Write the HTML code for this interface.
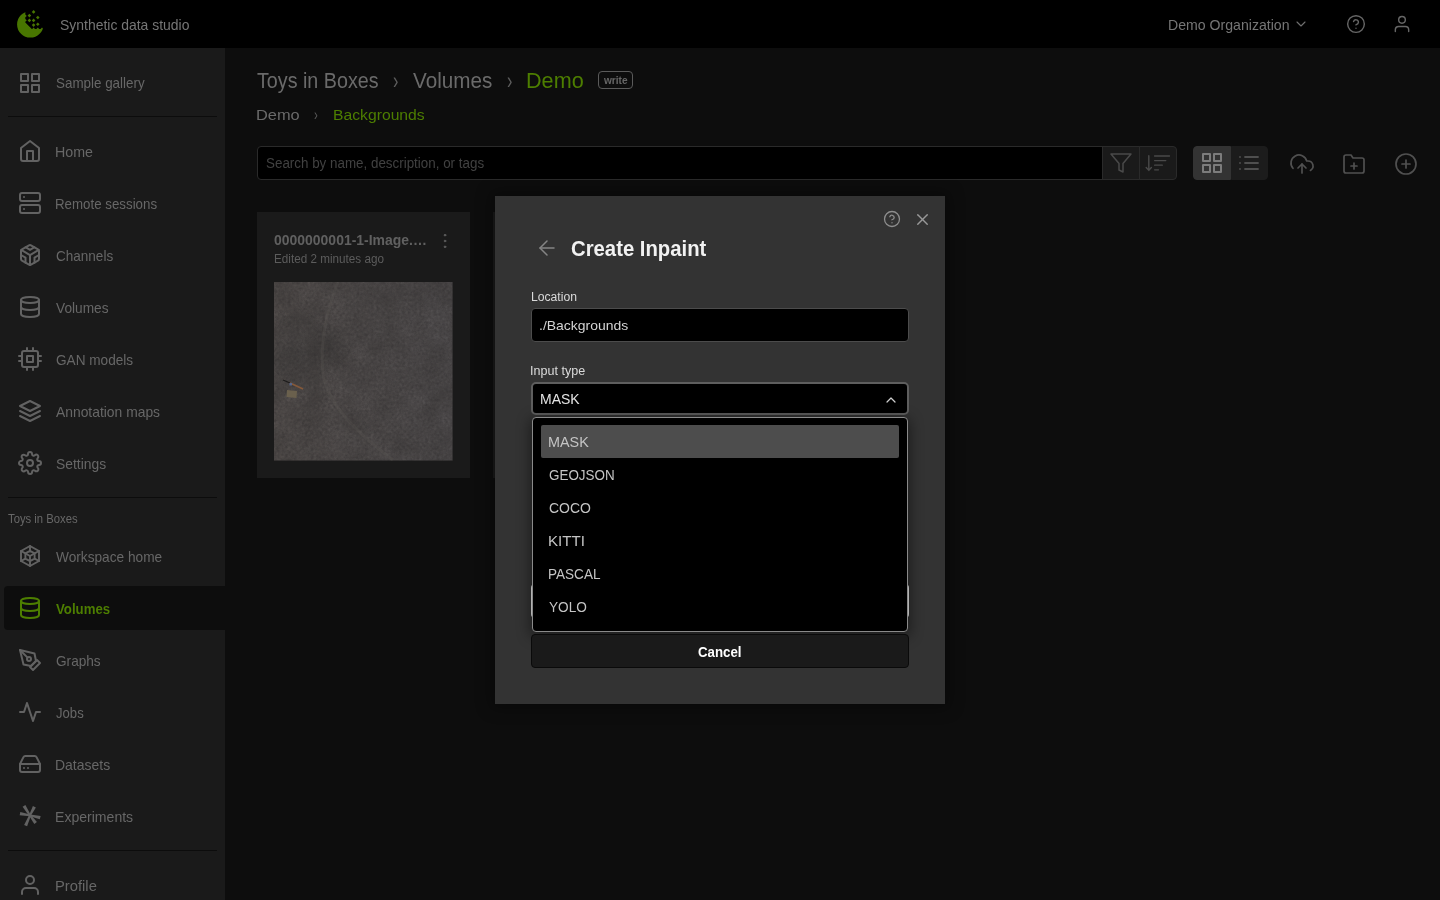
<!DOCTYPE html>
<html lang="en"><head><meta charset="utf-8"><title>Synthetic data studio</title>
<style>
*{box-sizing:border-box;margin:0;padding:0}
html,body{width:1440px;height:900px;overflow:hidden;background:#0d0d0d;font-family:"Liberation Sans",sans-serif}
body{position:relative}
.a{position:absolute}
.t{position:absolute;white-space:nowrap;line-height:1;transform-origin:0 0;display:block}
svg.i{position:absolute;fill:none;stroke:#626262;stroke-width:2;stroke-linecap:round;stroke-linejoin:round;overflow:visible}
#hdr{left:0;top:0;width:1440px;height:48px;background:#000}
#side{left:0;top:48px;width:225px;height:852px;background:#1a1a1a}
.hr{position:absolute;left:8px;width:209px;height:1px;background:#0c0c0c}
#act{left:4px;top:586px;width:221px;height:44px;background:#0d0d0d;border-radius:4px 0 0 4px}
#search{left:257px;top:146px;width:846px;height:34px;background:#000;border:1px solid #2a2a2a;border-radius:4px 0 0 4px}
.tb{position:absolute;top:146px;height:34px;background:#1a1a1a;border:1px solid #2a2a2a}
.card{position:absolute;top:212px;height:266px;background:#1a1a1a}
#badge{left:598px;top:71px;width:35px;height:18px;border:1px solid #5a5a5a;border-radius:4px}
#modal{left:495px;top:196px;width:450px;height:508px;background:#333;box-shadow:0 0 14px 4px rgba(0,0,0,.35)}
.inp{position:absolute;left:531px;width:378px;background:#000;border-radius:4px}
#pop{left:532px;top:417px;width:376px;height:215px;background:#000;border:1px solid #8a8a8a;border-radius:4px;box-shadow:0 3px 14px 2px rgba(0,0,0,.45)}
#sel{left:541px;top:425px;width:358px;height:33px;background:#4d4d4d;border-radius:2px}

</style></head>
<body>
<div class="a" id="hdr"></div>
<div class="a" id="side"></div>
<div class="hr" style="top:116px"></div>
<div class="hr" style="top:497px"></div>
<div class="hr" style="top:850px"></div>
<div class="a" id="act"></div>

<!-- logo -->
<svg class="a" style="left:0;top:0" width="60" height="48" viewBox="0 0 60 48">
  <defs><clipPath id="lc"><circle cx="30.3" cy="24.4" r="13.2"/></clipPath></defs>
  <g fill="#487600">
    <polygon clip-path="url(#lc)" points="0,0 26.2,0 25.3,13 25.3,14.5 26.8,15.9 25.3,17.3 25.3,18.9 26.8,20.3 25.3,21.7 25.3,22.4 31.8,29 32.2,29 33.6,27.6 35,29 36.4,29 37.8,27.6 39.2,29 40.6,29 42,27.6 43.4,29 60,29 60,48 0,48"/>
    <g id="dm">
      <polygon points="33.6,10.1 35.4,11.9 33.6,13.7 31.8,11.9"/>
      <polygon points="29.4,13.8 31.2,15.6 29.4,17.4 27.6,15.6"/>
      <polygon points="37.8,15.7 39.6,17.5 37.8,19.3 36,17.5"/>
      <polygon points="29.4,18.6 31.2,20.4 29.4,22.2 27.6,20.4"/>
      <polygon points="33.6,18.6 35.4,20.4 33.6,22.2 31.8,20.4"/>
      <polygon points="33.6,23.3 35.4,25.1 33.6,26.9 31.8,25.1"/>
      <polygon points="37.8,22.5 39.6,24.3 37.8,26.1 36,24.3"/>
    </g>
  </g>
</svg>

<!-- header right icons -->
<svg class="i" style="left:1293px;top:15.5px;stroke:#707070;stroke-width:1.6" width="16" height="16" viewBox="0 0 24 24"><polyline points="6 9 12 15 18 9"/></svg>
<svg class="i" style="left:1346px;top:14px;stroke:#666;stroke-width:1.7" width="20" height="20" viewBox="0 0 24 24"><circle cx="12" cy="12" r="10"/><path d="M9.09 9a3 3 0 0 1 5.83 1c0 2-3 3-3 3"/><line x1="12" y1="17" x2="12.01" y2="17"/></svg>
<svg class="i" style="left:1392px;top:14px;stroke:#666;stroke-width:1.7" width="20" height="20" viewBox="0 0 24 24"><path d="M20 21v-2a4 4 0 0 0-4-4H8a4 4 0 0 0-4 4v2"/><circle cx="12" cy="7" r="4"/></svg>

<!-- sidebar icons -->
<svg class="i" style="left:18px;top:71px" width="24" height="24" viewBox="0 0 24 24"><rect x="3" y="3" width="7" height="7"/><rect x="14" y="3" width="7" height="7"/><rect x="14" y="14" width="7" height="7"/><rect x="3" y="14" width="7" height="7"/></svg>
<svg class="i" style="left:18px;top:139px" width="24" height="24" viewBox="0 0 24 24"><path d="M3 9l9-7 9 7v11a2 2 0 0 1-2 2H5a2 2 0 0 1-2-2z"/><polyline points="9 22 9 12 15 12 15 22"/></svg>
<svg class="i" style="left:18px;top:191px" width="24" height="24" viewBox="0 0 24 24"><rect x="2" y="2" width="20" height="8" rx="2" ry="2"/><rect x="2" y="14" width="20" height="8" rx="2" ry="2"/><line x1="6" y1="6" x2="6.01" y2="6"/><line x1="6" y1="18" x2="6.01" y2="18"/></svg>
<svg class="i" style="left:18px;top:243px" width="24" height="24" viewBox="0 0 24 24"><path d="M21 16V8a2 2 0 0 0-1-1.73l-7-4a2 2 0 0 0-2 0l-7 4A2 2 0 0 0 3 8v8a2 2 0 0 0 1 1.73l7 4a2 2 0 0 0 2 0l7-4A2 2 0 0 0 21 16z"/><polyline points="7.5 4.21 12 6.81 16.5 4.21"/><polyline points="7.5 19.79 7.5 14.6 3 12"/><polyline points="21 12 16.5 14.6 16.5 19.79"/><polyline points="3.27 6.96 12 12.01 20.73 6.96"/><line x1="12" y1="22.08" x2="12" y2="12"/></svg>
<svg class="i" style="left:18px;top:295px" width="24" height="24" viewBox="0 0 24 24"><ellipse cx="12" cy="5" rx="9" ry="3"/><path d="M21 12c0 1.66-4 3-9 3s-9-1.34-9-3"/><path d="M3 5v14c0 1.66 4 3 9 3s9-1.34 9-3V5"/></svg>
<svg class="i" style="left:18px;top:347px" width="24" height="24" viewBox="0 0 24 24"><rect x="4" y="4" width="16" height="16" rx="2" ry="2"/><rect x="9" y="9" width="6" height="6"/><line x1="9" y1="1" x2="9" y2="4"/><line x1="15" y1="1" x2="15" y2="4"/><line x1="9" y1="20" x2="9" y2="23"/><line x1="15" y1="20" x2="15" y2="23"/><line x1="20" y1="9" x2="23" y2="9"/><line x1="20" y1="14" x2="23" y2="14"/><line x1="1" y1="9" x2="4" y2="9"/><line x1="1" y1="14" x2="4" y2="14"/></svg>
<svg class="i" style="left:18px;top:399px" width="24" height="24" viewBox="0 0 24 24"><polygon points="12 2 2 7 12 12 22 7 12 2"/><polyline points="2 17 12 22 22 17"/><polyline points="2 12 12 17 22 12"/></svg>
<svg class="i" style="left:18px;top:451px" width="24" height="24" viewBox="0 0 24 24"><circle cx="12" cy="12" r="3"/><path d="M19.4 15a1.65 1.65 0 0 0 .33 1.82l.06.06a2 2 0 0 1 0 2.83 2 2 0 0 1-2.83 0l-.06-.06a1.65 1.65 0 0 0-1.82-.33 1.65 1.65 0 0 0-1 1.51V21a2 2 0 0 1-2 2 2 2 0 0 1-2-2v-.09A1.65 1.65 0 0 0 9 19.4a1.65 1.65 0 0 0-1.82.33l-.06.06a2 2 0 0 1-2.83 0 2 2 0 0 1 0-2.83l.06-.06a1.65 1.65 0 0 0 .33-1.82 1.65 1.65 0 0 0-1.51-1H3a2 2 0 0 1-2-2 2 2 0 0 1 2-2h.09A1.65 1.65 0 0 0 4.6 9a1.65 1.65 0 0 0-.33-1.82l-.06-.06a2 2 0 0 1 0-2.83 2 2 0 0 1 2.83 0l.06.06a1.65 1.65 0 0 0 1.82.33H9a1.65 1.65 0 0 0 1-1.51V3a2 2 0 0 1 2-2 2 2 0 0 1 2 2v.09a1.65 1.65 0 0 0 1 1.51 1.65 1.65 0 0 0 1.82-.33l.06-.06a2 2 0 0 1 2.83 0 2 2 0 0 1 0 2.83l-.06.06a1.65 1.65 0 0 0-.33 1.82V9a1.65 1.65 0 0 0 1.51 1H21a2 2 0 0 1 2 2 2 2 0 0 1-2 2h-.09a1.65 1.65 0 0 0-1.51 1z"/></svg>
<!-- workspace home: nested hexagons -->
<svg class="i" style="left:18px;top:544px;stroke-width:1.9" width="24" height="24" viewBox="0 0 24 24"><polygon points="12 2 21 7 21 17 12 22 3 17 3 7"/><polygon points="12 6.800 16.600 9.400 16.600 14.600 12 17.200 7.400 14.600 7.400 9.400"/><path d="M12 2V6.800M21 7l-4.400 2.400M21 17l-4.400-2.400M12 22V17.200M3 17l4.400-2.400M3 7l4.400 2.400M12 12l-4.600-2.600M12 12l4.600-2.600M12 12v5.200"/></svg>
<svg class="i" style="left:18px;top:596px;stroke:#4d7e00" width="24" height="24" viewBox="0 0 24 24"><ellipse cx="12" cy="5" rx="9" ry="3"/><path d="M21 12c0 1.66-4 3-9 3s-9-1.34-9-3"/><path d="M3 5v14c0 1.66 4 3 9 3s9-1.34 9-3V5"/></svg>
<svg class="i" style="left:18px;top:648px" width="24" height="24" viewBox="0 0 24 24"><path d="M12 19l7-7 3 3-7 7-3-3z"/><path d="M18 13l-1.500-7.500L2 2l3.500 14.500L13 18l5-5z"/><path d="M2 2l7.586 7.586"/><circle cx="11" cy="11" r="2"/></svg>
<svg class="i" style="left:18px;top:700px" width="24" height="24" viewBox="0 0 24 24"><polyline points="22 12 18 12 15 21 9 3 6 12 2 12"/></svg>
<svg class="i" style="left:18px;top:752px" width="24" height="24" viewBox="0 0 24 24"><line x1="22" y1="12" x2="2" y2="12"/><path d="M5.45 5.11L2 12v6a2 2 0 0 0 2 2h16a2 2 0 0 0 2-2v-6l-3.450-6.890A2 2 0 0 0 16.760 4H7.240a2 2 0 0 0-1.790 1.110z"/><line x1="6" y1="16" x2="6.010" y2="16"/><line x1="10" y1="16" x2="10.010" y2="16"/></svg>
<!-- experiments: tapered asterisk -->
<svg class="a" style="left:18px;top:803px" width="24" height="24" viewBox="18 803 24 24"><g fill="#626262"><polygon points="30.8,814.9 25.4,805.0 22.6,806.8 29.2,815.9"/><polygon points="30.8,815.8 35.9,807.6 32.9,806.0 29.2,815.0"/><polygon points="30.2,814.5 20.3,812.1 19.7,815.3 29.8,816.3"/><polygon points="29.8,816.3 39.8,819.3 40.6,816.1 30.2,814.5"/><polygon points="29.1,815.0 24.1,825.1 27.1,826.3 30.9,815.8"/><polygon points="29.2,816.0 34.3,824.0 36.9,822.0 30.8,814.8"/><circle cx="30" cy="815.400" r="1.500"/></g></svg>
<svg class="i" style="left:18px;top:873px" width="24" height="24" viewBox="0 0 24 24"><path d="M20 21v-2a4 4 0 0 0-4-4H8a4 4 0 0 0-4 4v2"/><circle cx="12" cy="7" r="4"/></svg>

<!-- breadcrumbs -->
<div class="a" id="badge"></div>

<!-- toolbar -->
<div class="a" id="search"></div>
<div class="tb" style="left:1102px;width:38px"></div>
<div class="tb" style="left:1139px;width:38px;border-radius:0 4px 4px 0"></div>
<div class="tb" style="left:1193px;width:38px;background:#333;border-color:#333;border-radius:4px 0 0 4px"></div>
<div class="tb" style="left:1231px;width:37px;background:#1c1c1c;border-color:#1c1c1c;border-radius:0 4px 4px 0"></div>
<svg class="i" style="left:1109px;top:151px;stroke:#4a4a4a;stroke-width:1.5" width="24" height="24" viewBox="0 0 24 24"><polygon points="22 3 2 3 10 12.460 10 19 14 21 14 12.460 22 3"/></svg>
<svg class="i" style="left:1140px;top:146px;stroke:#4a4a4a;stroke-width:1.4" width="36" height="34" viewBox="1140 146 36 34"><path d="M1148.800 155.800V170.300M1146.200 167.500l2.600 2.900 2.600-2.900"/><path d="M1154.600 156H1169.500M1154.600 160.600H1165.800M1154.600 165.200H1162.300M1154.600 169.800H1158.500" stroke-width="1.3"/></svg>
<svg class="i" style="left:1200px;top:151px;stroke:#7c7c7c" width="24" height="24" viewBox="0 0 24 24"><rect x="3" y="3" width="7" height="7"/><rect x="14" y="3" width="7" height="7"/><rect x="14" y="14" width="7" height="7"/><rect x="3" y="14" width="7" height="7"/></svg>
<svg class="i" style="left:1237px;top:151px;stroke:#4f4f4f;stroke-width:1.8" width="24" height="24" viewBox="0 0 24 24"><line x1="8" y1="6" x2="21" y2="6"/><line x1="8" y1="12" x2="21" y2="12"/><line x1="8" y1="18" x2="21" y2="18"/><line x1="3" y1="6" x2="3.010" y2="6"/><line x1="3" y1="12" x2="3.010" y2="12"/><line x1="3" y1="18" x2="3.010" y2="18"/></svg>
<svg class="i" style="left:1290px;top:152px;stroke:#505050;stroke-width:1.7" width="24" height="24" viewBox="0 0 24 24"><polyline points="16 16 12 12 8 16"/><line x1="12" y1="12" x2="12" y2="21"/><path d="M20.390 18.390A5 5 0 0 0 18 9h-1.260A8 8 0 1 0 3 16.300"/></svg>
<svg class="i" style="left:1342px;top:152px;stroke:#505050;stroke-width:1.7" width="24" height="24" viewBox="0 0 24 24"><path d="M22 19a2 2 0 0 1-2 2H4a2 2 0 0 1-2-2V5a2 2 0 0 1 2-2h5l2 3h9a2 2 0 0 1 2 2z"/><line x1="12" y1="11" x2="12" y2="17"/><line x1="9" y1="14" x2="15" y2="14"/></svg>
<svg class="i" style="left:1394px;top:152px;stroke:#505050;stroke-width:1.7" width="24" height="24" viewBox="0 0 24 24"><circle cx="12" cy="12" r="10"/><line x1="12" y1="8" x2="12" y2="16"/><line x1="8" y1="12" x2="16" y2="12"/></svg>

<!-- cards -->
<div class="card" style="left:257px;width:213px"></div>
<div class="card" style="left:493px;width:213px"></div>
<svg class="i" style="left:434.500px;top:231px;stroke:#5c5c5c;stroke-width:1.200;fill:#5c5c5c" width="20" height="20" viewBox="0 0 24 24"><circle cx="12" cy="12" r="1"/><circle cx="12" cy="5" r="1"/><circle cx="12" cy="19" r="1"/></svg>
<!-- thumbnail -->
<svg class="a" style="left:274px;top:282px" width="178.500" height="178.500" viewBox="0 0 178.500 178.500">
  <defs>
    <filter id="nz" x="0" y="0" width="100%" height="100%" color-interpolation-filters="sRGB"><feTurbulence type="fractalNoise" baseFrequency="0.35" numOctaves="3" seed="7"/><feColorMatrix type="matrix" values="0 0 0 0 0.16  0 0 0 0 0.15  0 0 0 0 0.155  0.9 0.9 0.9 0 -0.85"/></filter>
    <filter id="nz2" x="0" y="0" width="100%" height="100%" color-interpolation-filters="sRGB"><feTurbulence type="fractalNoise" baseFrequency="0.04" numOctaves="2" seed="11"/><feColorMatrix type="matrix" values="0 0 0 0 0.2  0 0 0 0 0.19  0 0 0 0 0.185  1.4 1.4 0 0 -0.95"/></filter>
    <radialGradient id="g1" cx="0.3" cy="0.37" r="0.16"><stop offset="0" stop-color="#444140"/><stop offset="1" stop-color="#444140" stop-opacity="0"/></radialGradient>
    <radialGradient id="g2" cx="0.12" cy="0.4" r="0.25"><stop offset="0" stop-color="#484544"/><stop offset="1" stop-color="#484544" stop-opacity="0"/></radialGradient>
    <linearGradient id="g3" x1="0" y1="0" x2="1" y2="0"><stop offset="0" stop-color="#56514f"/><stop offset="1" stop-color="#524f50"/></linearGradient>
  </defs>
  <rect width="178.500" height="178.500" fill="url(#g3)"/>
  <rect width="178.500" height="178.500" fill="url(#g2)"/>
  <rect width="178.500" height="178.500" fill="url(#g1)"/>
  <rect width="178.500" height="178.500" filter="url(#nz2)" opacity=".35"/>
  <rect width="178.500" height="178.500" filter="url(#nz)" opacity=".4"/>
  <path d="M64 0C52 30 46 60 49 92c4 30 35 60 70 86" fill="none" stroke="#5e5a54" stroke-width="3" opacity=".26"/>
  <path d="M9 98l7 3" stroke="#1c1b1b" stroke-width="1.200"/>
  <path d="M16 101l13 6" stroke="#85593a" stroke-width="1.800"/>
  <rect x="15.500" y="101" width="2.500" height="2.500" fill="#55648a"/>
  <polygon points="13,108 23,109 22.500,116 12.500,115" fill="#6a604d"/>
</svg>

<!-- modal -->
<div class="a" id="modal"></div>
<svg class="i" style="left:883px;top:210px;stroke:#8e8e8e;stroke-width:1.7" width="18" height="18" viewBox="0 0 24 24"><circle cx="12" cy="12" r="10"/><path d="M9.090 9a3 3 0 0 1 5.830 1c0 2-3 3-3 3"/><line x1="12" y1="17" x2="12.010" y2="17"/></svg>
<svg class="i" style="left:912.500px;top:209.500px;stroke:#999;stroke-width:1.7" width="19" height="19" viewBox="0 0 24 24"><line x1="18" y1="6" x2="6" y2="18"/><line x1="6" y1="6" x2="18" y2="18"/></svg>
<svg class="i" style="left:535px;top:236px;stroke:#858585;stroke-width:1.5" width="24" height="24" viewBox="0 0 24 24"><line x1="19" y1="12" x2="5" y2="12"/><polyline points="12 19 5 12 12 5"/></svg>
<div class="inp" style="top:308px;height:34px;border:1px solid #4c4c4c"></div>
<div class="inp" style="top:382px;height:33px;border:2px solid #5e5e5e;border-radius:5px"></div>
<svg class="i" style="left:883px;top:391.500px;stroke:#d0d0d0;stroke-width:1.8" width="16" height="16" viewBox="0 0 24 24"><polyline points="18 15 12 9 6 15"/></svg>
<!-- primary button hidden behind the list -->
<div class="inp" style="top:584px;height:34px;background:#f2f2f2"></div>
<div class="a" id="pop"></div>
<div class="a" id="sel"></div>
<div class="inp" style="top:634px;height:34px;background:#1a1a1a;border:1px solid #0a0a0a"></div>

<!-- text layer -->
<span class="t" id="t0" style="left:59.87px;top:17.30px;font-size:15px;font-weight:400;color:#767676;transform:scaleX(0.9297)">Synthetic data studio</span>
<span class="t" id="t1" style="left:1168.09px;top:17.30px;font-size:15px;font-weight:400;color:#767676;transform:scaleX(0.9407)">Demo Organization</span>
<span class="t" id="t2" style="left:55.89px;top:75.30px;font-size:15px;font-weight:400;color:#676767;transform:scaleX(0.8933)">Sample gallery</span>
<span class="t" id="t3" style="left:55.33px;top:144.30px;font-size:15px;font-weight:400;color:#676767;transform:scaleX(0.9497)">Home</span>
<span class="t" id="t4" style="left:55.41px;top:196.30px;font-size:15px;font-weight:400;color:#676767;transform:scaleX(0.8871)">Remote sessions</span>
<span class="t" id="t5" style="left:55.81px;top:248.30px;font-size:15px;font-weight:400;color:#676767;transform:scaleX(0.9020)">Channels</span>
<span class="t" id="t6" style="left:56.44px;top:300.30px;font-size:15px;font-weight:400;color:#676767;transform:scaleX(0.9133)">Volumes</span>
<span class="t" id="t7" style="left:55.82px;top:352.30px;font-size:15px;font-weight:400;color:#676767;transform:scaleX(0.9076)">GAN models</span>
<span class="t" id="t8" style="left:56.47px;top:404.30px;font-size:15px;font-weight:400;color:#676767;transform:scaleX(0.9241)">Annotation maps</span>
<span class="t" id="t9" style="left:55.87px;top:456.30px;font-size:15px;font-weight:400;color:#676767;transform:scaleX(0.9249)">Settings</span>
<span class="t" id="t10" style="left:7.75px;top:512.00px;font-size:13px;font-weight:400;color:#676767;transform:scaleX(0.8686)">Toys in Boxes</span>
<span class="t" id="t11" style="left:56.44px;top:549.30px;font-size:15px;font-weight:400;color:#676767;transform:scaleX(0.9117)">Workspace home</span>
<span class="t" id="t12" style="left:56.41px;top:601.30px;font-size:15px;font-weight:700;color:#4d7e00;transform:scaleX(0.8816)">Volumes</span>
<span class="t" id="t13" style="left:55.81px;top:653.30px;font-size:15px;font-weight:400;color:#676767;transform:scaleX(0.9080)">Graphs</span>
<span class="t" id="t14" style="left:56.30px;top:705.30px;font-size:15px;font-weight:400;color:#676767;transform:scaleX(0.8735)">Jobs</span>
<span class="t" id="t15" style="left:55.35px;top:757.30px;font-size:15px;font-weight:400;color:#676767;transform:scaleX(0.9316)">Datasets</span>
<span class="t" id="t16" style="left:55.35px;top:809.30px;font-size:15px;font-weight:400;color:#676767;transform:scaleX(0.9375)">Experiments</span>
<span class="t" id="t17" style="left:55.29px;top:878.30px;font-size:15px;font-weight:400;color:#676767;transform:scaleX(0.9844)">Profile</span>
<span class="t" id="t18" style="left:256.86px;top:69.72px;font-size:21.6px;font-weight:400;color:#6a6a6a;transform:scaleX(0.9123)">Toys in Boxes</span>
<span class="t" id="t19" style="left:413.21px;top:69.72px;font-size:21.6px;font-weight:400;color:#6a6a6a;transform:scaleX(0.9566)">Volumes</span>
<span class="t" id="t20" style="left:525.53px;top:69.72px;font-size:21.6px;font-weight:400;color:#4d7e00;transform:scaleX(1.0013)">Demo</span>
<span class="t" id="t21" style="left:392.92px;top:70.33px;font-size:23px;font-weight:400;color:#5e5e5e;transform:scaleX(0.7000)">›</span>
<span class="t" id="t22" style="left:506.72px;top:70.33px;font-size:23px;font-weight:400;color:#5e5e5e;transform:scaleX(0.7000)">›</span>
<span class="t" id="t23" style="left:314.10px;top:106.79px;font-size:15.6px;font-weight:400;color:#585858;transform:scaleX(0.7300)">›</span>
<span class="t" id="t24" style="left:603.73px;top:75.11px;font-size:10.5px;font-weight:700;color:#666666;transform:scaleX(0.9633)">write</span>
<span class="t" id="t25" style="left:255.96px;top:106.88px;font-size:15.5px;font-weight:400;color:#6a6a6a;transform:scaleX(1.0574)">Demo</span>
<span class="t" id="t26" style="left:332.56px;top:106.88px;font-size:15.5px;font-weight:400;color:#4d7e00;transform:scaleX(1.0135)">Backgrounds</span>
<span class="t" id="t27" style="left:265.69px;top:156.15px;font-size:14px;font-weight:400;color:#414141;transform:scaleX(0.9565)">Search by name, description, or tags</span>
<span class="t" id="t28" style="left:273.65px;top:232.73px;font-size:14.5px;font-weight:700;color:#606060;transform:scaleX(0.9630)">0000000001-1-Image.…</span>
<span class="t" id="t29" style="left:273.54px;top:252.84px;font-size:12px;font-weight:400;color:#5c5c5c;transform:scaleX(0.9752)">Edited 2 minutes ago</span>
<span class="t" id="t30" style="left:570.87px;top:238.50px;font-size:21.5px;font-weight:700;color:#f2f2f2;transform:scaleX(0.9442)">Create Inpaint</span>
<span class="t" id="t31" style="left:530.60px;top:290.84px;font-size:12px;font-weight:400;color:#dadada;transform:scaleX(1.0135)">Location</span>
<span class="t" id="t32" style="left:539.42px;top:318.57px;font-size:13.5px;font-weight:400;color:#d4d4d4;transform:scaleX(1.0344)">./Backgrounds</span>
<span class="t" id="t33" style="left:530.44px;top:364.84px;font-size:12px;font-weight:400;color:#dadada;transform:scaleX(1.0455)">Input type</span>
<span class="t" id="t34" style="left:540.35px;top:391.64px;font-size:14.6px;font-weight:400;color:#e4e4e4;transform:scaleX(0.9576)">MASK</span>
<span class="t" id="t35" style="left:548.22px;top:433.88px;font-size:15.5px;font-weight:400;color:#c4c4c4;transform:scaleX(0.9272)">MASK</span>
<span class="t" id="t36" style="left:548.72px;top:466.88px;font-size:15.5px;font-weight:400;color:#c4c4c4;transform:scaleX(0.8664)">GEOJSON</span>
<span class="t" id="t37" style="left:548.69px;top:499.88px;font-size:15.5px;font-weight:400;color:#c4c4c4;transform:scaleX(0.9028)">COCO</span>
<span class="t" id="t38" style="left:548.16px;top:532.88px;font-size:15.5px;font-weight:400;color:#c4c4c4;transform:scaleX(0.9747)">KITTI</span>
<span class="t" id="t39" style="left:548.29px;top:565.88px;font-size:15.5px;font-weight:400;color:#c4c4c4;transform:scaleX(0.8739)">PASCAL</span>
<span class="t" id="t40" style="left:549.10px;top:598.88px;font-size:15.5px;font-weight:400;color:#c4c4c4;transform:scaleX(0.8787)">YOLO</span>
<span class="t" id="t41" style="left:698.46px;top:644.00px;font-size:15px;font-weight:700;color:#ffffff;transform:scaleX(0.8837)">Cancel</span>
</body></html>
